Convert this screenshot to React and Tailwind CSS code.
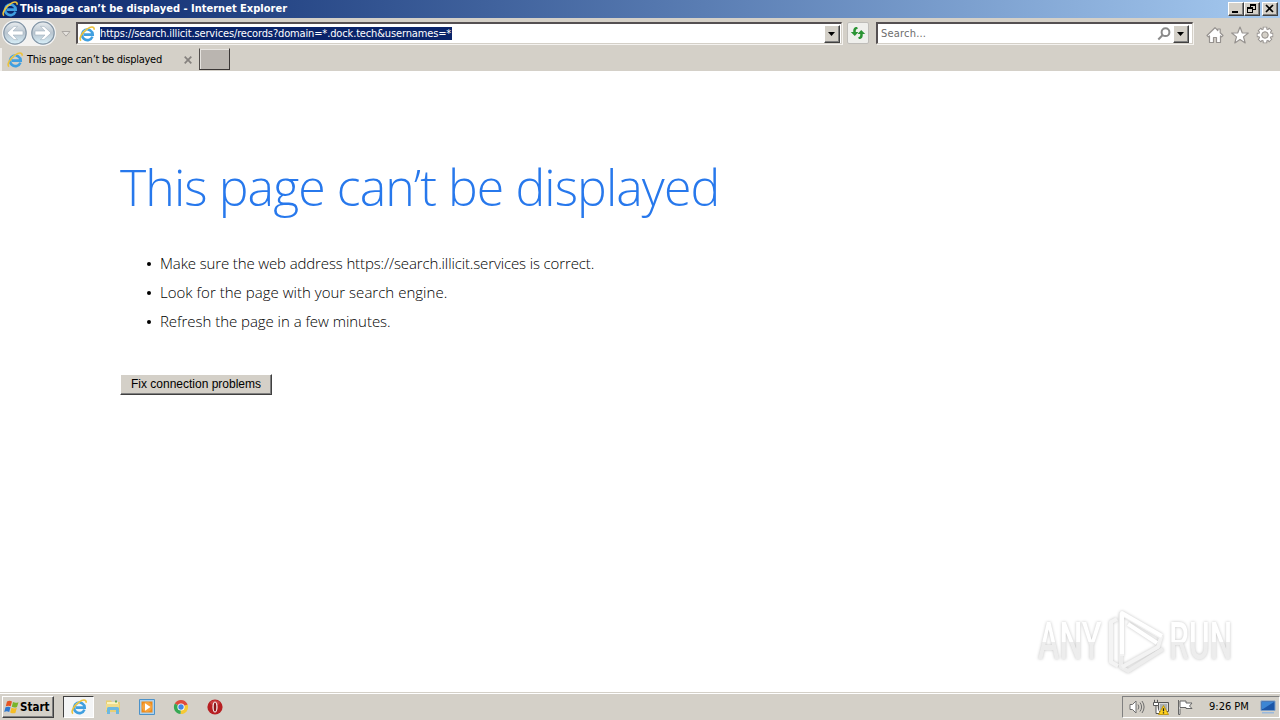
import React from "react";

const TAHOMA = "font-['DejaVu_Sans_Condensed','DejaVu_Sans',sans-serif] [font-stretch:condensed]";

function IELogo({ className }) {
  return (
    <svg viewBox="0 0 16 16" className={className}>
      <path d="M13.4 10.6A5.300 5.300 0 1 1 13.700 8.600H4.800" fill="none" stroke="#3f9fe0" strokeWidth="2.600" />
      <path d="M4.200 6.900A4.400 4.400 0 0 1 9 4" fill="none" stroke="#9bdcfb" strokeWidth="1.200" />
      <path d="M2.100 14.600C-.8 13.200 3 6.400 8 3.100 11.500.8 15.300-.2 15.200 3.700" fill="none" stroke="#edc23a" strokeWidth="1.600" />
    </svg>
  );
}

function NavButton({ flip }) {
  return (
    <svg viewBox="0 0 26 26" className="h-[26px] w-[26px]">
      <defs>
        <linearGradient id="nav" x1="0" y1="0" x2="0" y2="1">
          <stop offset="0" stopColor="#e9edf0" />
          <stop offset=".5" stopColor="#b9c5cf" />
          <stop offset="1" stopColor="#d8f0fa" />
        </linearGradient>
      </defs>
      <circle cx="13" cy="13" r="12.600" fill="#f4f5f6" />
      <circle cx="13" cy="13" r="11.200" fill="url(#nav)" stroke="#8496a6" strokeWidth="1.200" />
      <g transform={flip ? "translate(26 0) scale(-1 1)" : undefined}>
        <path d="M5 13l7-6.600h3.500l-4.500 4.600H21v4H11l4.500 4.600H12z" fill="#fff" stroke="#a3b2bf" strokeWidth=".6" />
      </g>
    </svg>
  );
}

const raised = "border border-t-white border-l-white border-r-[#404040] border-b-[#404040] bg-[#d4d0c8] shadow-[inset_-1px_-1px_0_#808080]";

function DropButton() {
  return (
    <div className={`flex h-[18px] w-[16px] items-center justify-center ${raised}`}>
      <svg viewBox="0 0 8 4" className="h-1 w-2"><path d="M0 0h7L3.5 4z" fill="#000" /></svg>
    </div>
  );
}

function WindowButton({ children }) {
  return (
    <div className={`h-[14px] w-[16px] ${raised}`}>
      <svg viewBox="0 0 14 12" className="h-3 w-[14px]" fill="none" stroke="#000" shapeRendering="crispEdges">{children}</svg>
    </div>
  );
}

function TitleBar() {
  return (
    <header className="flex h-[18px] items-center bg-linear-to-r from-[#0a246a] to-[#a6caf0] pl-[2px] pr-[2px]">
      <IELogo className="h-4 w-4" />
      <span className={`ml-[2px] whitespace-nowrap text-[11px] leading-[18px] font-bold tracking-[0.01px] text-white ${TAHOMA}`}>
        This page can’t be displayed - Internet Explorer
      </span>
      <div className="ml-auto flex">
        <WindowButton><path d="M3 9h6" strokeWidth="2" /></WindowButton>
        <WindowButton>
          <path d="M5 1.5h6M5.5 2v2M10.5 2v5M8 6.5h3M2 4.5h6M2.5 5v5M7.5 5v5M2 9.5h6" />
          <path d="M5 2h6M2 5h6" />
        </WindowButton>
        <div className="w-[2px]" />
        <WindowButton><path d="M3 2l7 7M10 2l-7 7" strokeWidth="1.7" shapeRendering="auto" /></WindowButton>
      </div>
    </header>
  );
}

function AddressRow() {
  const field = "flex h-[22px] items-center border-t-2 border-l-2 border-b border-r border-t-[#555052] border-l-[#555052] border-b-[#d4d0c8] border-r-[#d4d0c8] bg-white shadow-[1px_1px_0_#f4f2ef]";
  return (
    <div className="flex h-[30px] items-start pl-[2px]">
      <div className="mt-[2px] flex h-[26px] w-[54px] rounded-full bg-[#f3f2f0]">
        <NavButton />
        <div className="ml-[2px]"><NavButton flip /></div>
      </div>
      <svg viewBox="0 0 10 6" className="mt-[13px] ml-[5px] h-[6px] w-[10px]"><path d="M1 .5h8L5 5.2z" fill="#e5e2de" stroke="#aaa6a2" /></svg>
      <div className={`mt-[4px] ml-[5px] w-[766px] pl-[1px] ${field}`}>
        <IELogo className="h-4 w-4" />
        <span className={`ml-[5px] h-[13px] w-[352px] whitespace-nowrap bg-[#0a246a] text-[11px] leading-[14px] tracking-[-0.14px] text-white ${TAHOMA}`}>
          https://search.illicit.services/records?domain=*.dock.tech&amp;usernames=*
        </span>
        <div className="ml-auto pr-[1px]"><DropButton /></div>
      </div>
      <div className="mt-[4px] ml-[5px] flex h-[22px] w-[22px] items-center justify-center rounded-[2px] border border-[#bfbdb9] bg-[#efefec]">
        <svg viewBox="0 0 16 14" className="h-[14px] w-4" fill="#2b9434">
          <path d="M7 1C4 1 3 3 3.300 6H.8l4 4 3.600-4H5.800C5.600 4 6 3 8 2.500z" />
          <path d="M9 13c3 0 4-2 3.700-5h2.500l-4-4-3.600 4h2.600c.2 2-.2 3-2.200 3.500z" />
        </svg>
      </div>
      <div className={`mt-[4px] ml-[7px] w-[317px] pl-[3px] ${field}`}>
        <span className={`whitespace-nowrap text-[11px] leading-[18px] tracking-[0.2px] text-[#6d6d6d] ${TAHOMA}`}>Search...</span>
        <svg viewBox="0 0 14 14" className="ml-auto mr-[2px] h-[14px] w-[14px]" fill="none" stroke="#8a8a8a" strokeWidth="2">
          <circle cx="8.500" cy="5.200" r="3.900" /><path d="M5.700 8L1.300 12.500" />
        </svg>
        <div className="pr-[3px]"><DropButton /></div>
      </div>
      <div className="mt-[8px] ml-[13px] flex h-[18px] items-center gap-[7px]">
        <svg viewBox="0 0 18 18" className="h-[18px] w-[18px]" fill="#fff" stroke="#96928f" strokeWidth="1.200" strokeLinejoin="round">
          <path d="M1 9.500L9 1.700l2.800 2.800V3h2.400v3.800L17 9.500l-1.400 1.400-1.100-1v6.600h-4v-5h-3v5h-4V9.900l-1.100 1z" />
        </svg>
        <svg viewBox="0 0 18 18" className="h-[18px] w-[18px]" fill="#fff" stroke="#96928f" strokeWidth="1.200" strokeLinejoin="round">
          <path d="M9 1l2.200 5.800 6.100.2-4.800 3.900 1.700 6L9 13.500l-5.200 3.400 1.700-6L.7 7l6.100-.2z" />
        </svg>
        <svg viewBox="0 0 18 18" className="h-[18px] w-[18px]">
          <g stroke="#96928f" strokeWidth="4.600"><path d="M9 .8v16.400M.8 9h16.400M3.200 3.200l11.600 11.600M14.800 3.200L3.200 14.800" /></g>
          <circle cx="9" cy="9" r="6.600" fill="#96928f" />
          <g stroke="#fff" strokeWidth="2.600"><path d="M9 1.600v14.800M1.600 9h14.800M3.800 3.800l10.400 10.400M14.200 3.800L3.800 14.200" /></g>
          <circle cx="9" cy="9" r="4.600" fill="#d4d0c8" stroke="#fff" strokeWidth="2.200" />
          <circle cx="9" cy="9" r="3.200" fill="#d4d0c8" stroke="#96928f" strokeWidth="1" />
        </svg>
      </div>
    </div>
  );
}

function TabRow() {
  return (
    <div className="flex h-[23px] items-start">
      <div className="flex h-[23px] w-[198px] items-center border-l-2 border-[#f0eeeb] pt-px pl-[5px]">
        <IELogo className="h-4 w-4" />
        <span className={`ml-[4px] whitespace-nowrap text-[11px] leading-[22px] tracking-[-0.26px] text-black ${TAHOMA}`}>This page can’t be displayed</span>
        <svg viewBox="0 0 8 8" className="ml-auto mr-[6px] h-2 w-2"><path d="M.7.7l6.600 6.600M7.300.7L.7 7.300" stroke="#85817e" strokeWidth="1.700" /></svg>
      </div>
      <div className="ml-[1px] h-[22px] w-[31px] border border-t-[#d4d0c8] border-l-[#504c4a] border-r-[#3a3635] border-b-[#3a3635] bg-[#bab5b0] shadow-[inset_1px_1px_0_#e6e3df]" />
    </div>
  );
}

function Watermark() {
  const word = "inline-block h-[44px] origin-top-left bg-linear-to-b from-white from-50% to-[#ededed] to-50% bg-clip-text text-[52px] leading-[44px] font-medium text-transparent font-['Roboto',sans-serif]";
  return (
    <div className="absolute top-[538px] left-[1038px] flex h-[64px] w-[196px] items-center [filter:drop-shadow(0_0_1.500px_#c4c4c4)]">
      <div className="h-[44px] w-[70px] pt-px"><span className={`${word} scale-x-[0.62]`}>ANY</span></div>
      <svg viewBox="0 0 58 64" className="h-16 w-[58px]" fill="none" strokeLinejoin="round" strokeWidth="4">
        <path d="M9 10L3 13v40l7 4" stroke="#f4f4f4" />
        <path d="M13 4v54l7 4 35-22" stroke="#ededed" />
        <path d="M14 47V5l39 23-3 10-36 20" stroke="#f3f3f3" />
        <path d="M14 45V4l40 23M20 15l29 19" stroke="#fff" />
      </svg>
      <div className="ml-[3px] h-[44px] w-[64px] pt-px"><span className={`${word} scale-x-[0.61]`}>RUN</span></div>
    </div>
  );
}

function ErrorPage() {
  const items = [
    ["Make sure the web address https://search.illicit.services is correct.", "tracking-[-0.13px]"],
    ["Look for the page with your search engine.", "tracking-[0.02px]"],
    ["Refresh the page in a few minutes.", "tracking-[-0.04px]"],
  ];
  return (
    <main className="relative h-[621px] bg-white pl-[120px] font-['Open_Sans',sans-serif]">
      <h1 className="pt-[83px] text-[50px] leading-[66px] font-light tracking-[-0.92px] whitespace-nowrap text-[#2778ec]">This page can’t be displayed</h1>
      <ul className="mt-[29px] text-[15px] leading-[29px] font-light text-black">
        {items.map(([text, tracking]) => (
          <li key={text} className="flex h-[29px] items-center pl-[27px]">
            <span className="mr-[9px] h-[4px] w-[4px] rounded-full bg-black" />
            <span className={`whitespace-nowrap ${tracking}`}>{text}</span>
          </li>
        ))}
      </ul>
      <button className={`mt-[38px] block h-[21px] w-[152px] whitespace-nowrap text-center text-[12px] leading-[17px] text-black font-['Liberation_Sans',sans-serif] ${raised}`}>
        Fix connection problems
      </button>
      <Watermark />
    </main>
  );
}

function Taskbar() {
  return (
    <footer className="flex h-[28px] items-start border-t border-[#d4d0c8] bg-[#d4d0c8] pt-[3px] shadow-[inset_0_1px_0_#fff]">
      <div className={`ml-[2px] flex h-[22px] w-[52px] items-center pl-[1px] ${raised}`}>
        <svg viewBox="0 0 16 16" className="h-4 w-4">
          <path d="M3 2.500c2-1 3.500-.8 5 0L6.700 7.300c-1.700-.8-3-.8-4.900 0z" fill="#e65523" />
          <path d="M9 3c2 1 3.500 1 5.500.2L13 8c-1.800.8-3.300.700-5.200-.3z" fill="#78b52a" />
          <path d="M1.500 8.300c2-.8 3.300-.8 5 0L5.200 13c-1.800-.9-3-.9-5 0z" fill="#2e78d0" />
          <path d="M7.500 8.800c2 1 3.500 1 5.300.3l-1.400 4.800c-1.900.7-3.300.6-5.200-.4z" fill="#f5bd26" />
        </svg>
        <span className={`text-[11.500px] leading-[18px] font-bold text-black ${TAHOMA}`}>Start</span>
      </div>
      <div className="ml-[9px] flex h-[22px] w-[31px] items-center justify-center border border-t-[#404040] border-l-[#404040] border-r-white border-b-white bg-[#f4f5f6]">
        <IELogo className="h-4 w-4" />
      </div>
      <svg viewBox="0 0 16 16" className="mt-[3px] ml-[11px] h-4 w-4">
        <path d="M1 1.500h5l1 1.500h8v10H1z" fill="#e8cf73" />
        <path d="M2 3h11v4H2z" fill="#fbf3bb" />
        <path d="M1 5h13v6H1z" fill="#f0dc8b" />
        <path d="M2 15V9.500Q2 8 3.500 8h9Q14 8 14 9.500V15h-3v-4H5v4z" fill="#6cb8e0" />
        <path d="M10 1.500h2v2h-2z" fill="#62a85a" />
      </svg>
      <svg viewBox="0 0 16 16" className="mt-[3px] ml-[18px] h-4 w-4">
        <path d="M.5.500h15v15H.5z" fill="#acd1ee" stroke="#4c92c9" />
        <path d="M2.500 2.500h11v11h-11z" fill="#ef8a18" />
        <circle cx="8" cy="8" r="5" fill="#f6a23c" />
        <path d="M6 4.200v7.600L11.500 8z" fill="#fff" />
      </svg>
      <svg viewBox="0 0 16 16" className="mt-[3px] ml-[18px] h-4 w-4">
        <path d="M8 8L1.800 4.500A7 7 0 0 1 14.200 4.800L14.500 6z" fill="#df4b3c" />
        <path d="M8 8l6.600-2.500A7 7 0 0 1 7.500 15z" fill="#f6c934" />
        <path d="M8 8L7.500 15A7 7 0 0 1 1.800 4.500z" fill="#36a853" />
        <circle cx="8" cy="8" r="3.600" fill="#fff" /><circle cx="8" cy="8" r="2.700" fill="#4286e6" />
      </svg>
      <svg viewBox="0 0 16 16" className="mt-[3px] ml-[18px] h-4 w-4">
        <circle cx="8" cy="8" r="7.600" fill="#b71f22" />
        <path d="M3 4a6 6 0 0 1 10 0L11 6H5z" fill="#d65355" opacity=".6" />
        <ellipse cx="8" cy="8" rx="2.600" ry="5.600" fill="#f5eeee" /><ellipse cx="8" cy="8" rx="1.300" ry="4.600" fill="#8c1518" />
      </svg>
      <div className="ml-auto flex h-[22px] w-[158px] items-center border border-t-[#808080] border-l-[#808080] border-r-white border-b-white pl-[6px]">
        <svg viewBox="0 0 16 16" className="h-4 w-4" fill="none" stroke="#6e6e6e">
          <path d="M1 5.500h2.500L7 2v12l-3.500-3.500H1z" fill="#fff" />
          <path d="M9 5.500q1.800 2.500 0 5M11 3.500q3.200 4.500 0 9M13 2q4.200 6 0 12" />
        </svg>
        <svg viewBox="0 0 16 16" className="ml-[8px] h-4 w-4">
          <path d="M5.500 3.500h10v9h-10z" fill="#d9d9d9" stroke="#555" /><path d="M7 5h7v6H7z" fill="#aab0b3" />
          <path d="M1.500.8v3M4.500.8v3M.5 3.500h5v3h-5zM3 6v8.500h4" fill="#fff" stroke="#555" />
          <path d="M10.500 6.500l5 9h-10z" fill="#ffd21c" stroke="#b88c00" strokeWidth=".8" /><path d="M10.500 9.300v3M10.500 13.300v1.200" stroke="#222" strokeWidth="1.300" />
        </svg>
        <svg viewBox="0 0 16 16" className="ml-[8px] h-4 w-4" fill="#fff" stroke="#666">
          <path d="M1.500 1v14.500h1.500V9.500" /><path d="M3 2h6v2h6l-2.500 3L15 9.500H9V8.500H3z" />
        </svg>
        <span className={`ml-[16px] whitespace-nowrap text-[11px] leading-[18px] text-black ${TAHOMA}`}>9:26 PM</span>
        <svg viewBox="0 0 16 14" className="ml-auto mr-[3px] h-[14px] w-4">
          <path d="M1 1h14v9.500H1z" fill="#1c56a8" stroke="#7d9fc8" /><path d="M2 2h12L3 9H2z" fill="#3d86d4" /><path d="M2 12h12v1.500H2z" fill="#9ab9dc" />
        </svg>
      </div>
    </footer>
  );
}

export default function App() {
  return (
    <div className="flex h-[720px] w-[1280px] flex-col overflow-hidden bg-[#d4d0c8]">
      <TitleBar />
      <AddressRow />
      <TabRow />
      <ErrorPage />
      <Taskbar />
    </div>
  );
}
